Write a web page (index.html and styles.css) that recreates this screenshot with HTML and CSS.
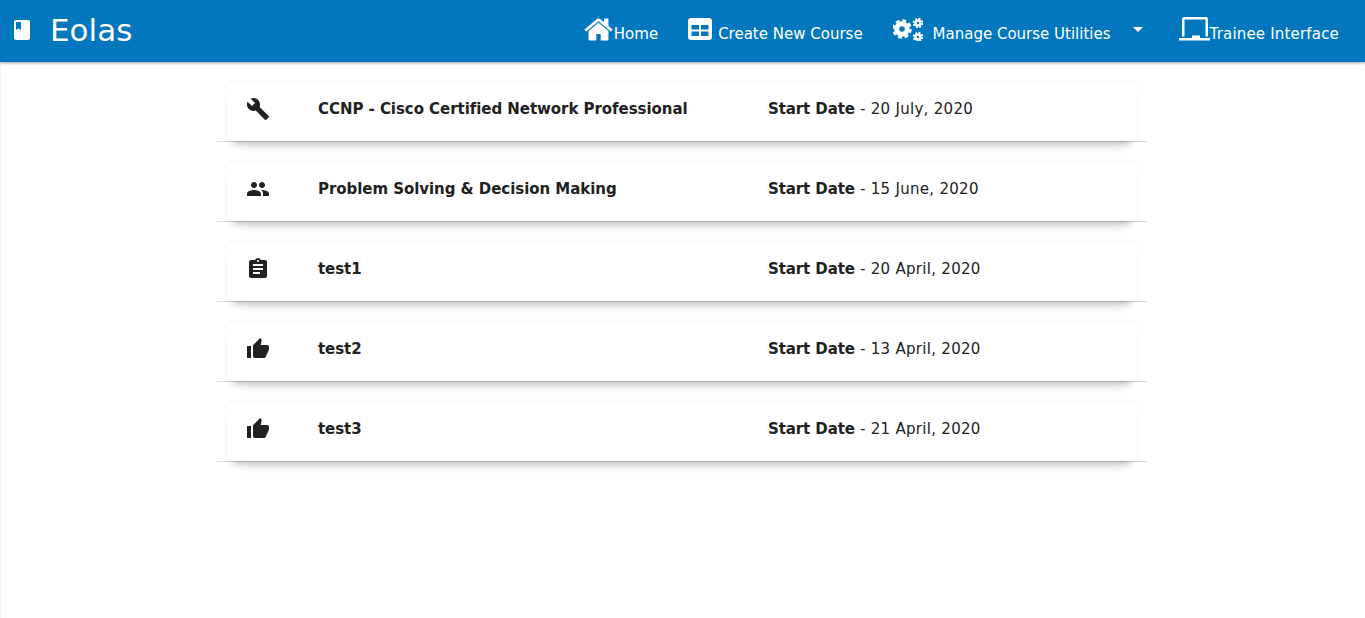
FILE: index.html
```html
<!DOCTYPE html>
<html lang="en">
<head>
<meta charset="utf-8">
<title>Eolas</title>
<link rel="stylesheet" href="styles.css">
</head>
<body>
<header class="topbar">
  <div class="brand">
    <svg class="brand-icon" viewBox="0 0 24 24"><path d="M18 2H6c-1.100 0-2 .9-2 2v16c0 1.100.9 2 2 2h12c1.100 0 2-.9 2-2V4c0-1.100-.9-2-2-2zM6 4h5v8l-2.500-1.500L6 12V4z"/></svg>
    <span class="brand-name">Eolas</span>
  </div>
  <nav class="nav">
    <a class="nav-item nav-home">
      <svg class="ic-home" viewBox="0 0 1792 1792"><path d="M1472 992v480q0 26-19 45t-45 19h-384v-384h-256v384h-384q-26 0-45-19t-19-45v-480q0-1 .5-3t.5-3l575-474 575 474q1 2 1 6zm223-69l-62 74q-8 9-21 11h-3q-13 0-21-7l-692-577-692 577q-12 8-24 7-13-2-21-11l-62-74q-8-10-7-23.500t11-21.500l719-599q32-26 76-26t76 26l244 204v-195q0-14 9-23t23-9h192q14 0 23 9t9 23v408l219 182q10 8 11 21.500t-7 23.500z"/></svg>
      <span>Home</span>
    </a>
    <a class="nav-item nav-create">
      <svg class="ic-table" viewBox="0 0 24 22"><path fill-rule="evenodd" d="M3 0h18a3 3 0 0 1 3 3v16a3 3 0 0 1-3 3H3a3 3 0 0 1-3-3V3a3 3 0 0 1 3-3zM3.500 7v4.500h7.500V7zM13 7v4.500h7.500V7zM3.500 13.500V18h7.500v-4.500zM13 13.500V18h7.500v-4.500z"/></svg>
      <span>Create New Course</span>
    </a>
    <a class="nav-item nav-manage">
      <svg class="ic-cogs" viewBox="0 0 30 24">
        <g fill="none" stroke="#fff">
          <circle cx="9" cy="12" r="5.300" stroke-width="5"/>
          <circle cx="9" cy="12" r="8.600" stroke-width="2.400" stroke-dasharray="3.900 2.850"/>
          <circle cx="25" cy="6" r="2.500" stroke-width="2.400"/>
          <circle cx="25" cy="6" r="4.300" stroke-width="1.800" stroke-dasharray="2 1.370"/>
          <circle cx="25" cy="20" r="2.500" stroke-width="2.400"/>
          <circle cx="25" cy="20" r="4.300" stroke-width="1.800" stroke-dasharray="2 1.370"/>
        </g>
      </svg>
      <span>Manage Course Utilities</span>
      <i class="caret"></i>
    </a>
    <a class="nav-item nav-trainee">
      <svg class="ic-laptop" viewBox="0 0 31 24"><path fill-rule="evenodd" d="M5 0h22a2 2 0 0 1 2 2v17.500h-2.500V2.500h-21v17H3V2a2 2 0 0 1 2-2zM0 21h13v-2.500h8V21h10v2.500H0z"/></svg>
      <span>Trainee Interface</span>
    </a>
  </nav>
</header>
<main class="list">
  <div class="row">
    <div class="card">
      <svg class="row-icon" viewBox="0 0 24 24"><path d="M22.700 19l-9.100-9.100c.9-2.300.4-5-1.500-6.900-2-2-5-2.400-7.400-1.300L9 6 6 9 1.600 4.700C.4 7.100.9 10.100 2.900 12.100c1.900 1.900 4.600 2.400 6.900 1.500l9.100 9.100c.4.400 1 .4 1.400 0l2.300-2.300c.5-.4.5-1.100.1-1.400z"/></svg>
      <div class="title">CCNP - Cisco Certified Network Professional</div>
      <div class="date"><b>Start Date</b> - 20 July, 2020</div>
    </div>
  </div>
  <div class="row">
    <div class="card">
      <svg class="row-icon" viewBox="0 0 24 24"><path d="M16 11c1.660 0 2.990-1.340 2.990-3S17.660 5 16 5c-1.660 0-3 1.340-3 3s1.340 3 3 3zm-8 0c1.660 0 2.990-1.340 2.990-3S9.660 5 8 5C6.340 5 5 6.340 5 8s1.340 3 3 3zm0 2c-2.330 0-7 1.170-7 3.500V19h14v-2.500c0-2.330-4.670-3.500-7-3.500zm8 0c-.29 0-.62.020-.97.050 1.160.84 1.970 1.970 1.970 3.450V19h6v-2.500c0-2.330-4.670-3.500-7-3.500z"/></svg>
      <div class="title">Problem Solving &amp; Decision Making</div>
      <div class="date"><b>Start Date</b> - 15 June, 2020</div>
    </div>
  </div>
  <div class="row">
    <div class="card">
      <svg class="row-icon" viewBox="0 0 24 24"><path d="M19 3h-4.180C14.400 1.840 13.300 1 12 1c-1.300 0-2.400.84-2.820 2H5c-1.100 0-2 .9-2 2v14c0 1.100.9 2 2 2h14c1.100 0 2-.9 2-2V5c0-1.100-.9-2-2-2zm-7 0c.55 0 1 .45 1 1s-.45 1-1 1-1-.45-1-1 .45-1 1-1zm2 14H7v-2h7v2zm3-4H7v-2h10v2zm0-4H7V7h10v2z"/></svg>
      <div class="title">test1</div>
      <div class="date"><b>Start Date</b> - 20 April, 2020</div>
    </div>
  </div>
  <div class="row">
    <div class="card">
      <svg class="row-icon" viewBox="0 0 24 24"><path d="M1 21h4V9H1v12zm22-11c0-1.100-.9-2-2-2h-6.310l.95-4.570.03-.32c0-.41-.17-.79-.44-1.060L14.170 1 7.590 7.590C7.220 7.950 7 8.450 7 9v10c0 1.100.9 2 2 2h9c.83 0 1.540-.5 1.840-1.220l3.020-7.050c.09-.23.14-.47.14-.73v-2z"/></svg>
      <div class="title">test2</div>
      <div class="date"><b>Start Date</b> - 13 April, 2020</div>
    </div>
  </div>
  <div class="row">
    <div class="card">
      <svg class="row-icon" viewBox="0 0 24 24"><path d="M1 21h4V9H1v12zm22-11c0-1.100-.9-2-2-2h-6.310l.95-4.570.03-.32c0-.41-.17-.79-.44-1.060L14.170 1 7.590 7.590C7.220 7.950 7 8.450 7 9v10c0 1.100.9 2 2 2h9c.83 0 1.540-.5 1.840-1.220l3.020-7.050c.09-.23.14-.47.14-.73v-2z"/></svg>
      <div class="title">test3</div>
      <div class="date"><b>Start Date</b> - 21 April, 2020</div>
    </div>
  </div>
</main>
</body>
</html>
```
FILE: styles.css
```css
* { box-sizing: border-box; }
html, body { height: 100%; }
body {
  margin: 0;
  background: #fff;
  box-shadow: inset 1px 0 0 #f3f3f3;
  color: #212121;
  font-family: "DejaVu Sans", Verdana, sans-serif;
  font-size: 15px;
  overflow: hidden;
}
.topbar {
  height: 62px;
  background: #0277bd;
  color: #fff;
  display: flex;
  align-items: center;
  justify-content: space-between;
  box-shadow: 0 1px 3px rgba(0,0,0,.4);
  padding: 0 26px 0 10px;
}
.brand { display: flex; align-items: center; }
.brand-icon { width: 24px; height: 24px; fill: #fff; margin-top: -2px; }
.brand-name { font-size: 31px; margin: -2px 0 0 16px; }
.nav { display: flex; align-items: center; }
.nav-item { display: flex; align-items: center; color: #fff; }
.nav-item span { position: relative; top: 3px; }
.nav-item svg { fill: #fff; display: block; }
.ic-home { width: 31px; height: 31px; margin-top: -4px; }
.nav-create { margin-left: 30px; }
.ic-table { width: 24px; height: 22px; margin: -4px 6px 0 0; }
.nav-manage { margin-left: 30px; }
.ic-cogs { width: 30px; height: 24px; margin: -4px 10px 0 0; }
.caret {
  width: 0; height: 0;
  border: 5px solid transparent;
  border-top-color: #fff;
  border-bottom: 0;
  margin: -3px 0 0 22px;
}
.nav-trainee { margin-left: 36px; }
.nav-trainee span { letter-spacing: .18px; }
.ic-laptop { width: 31px; height: 24px; margin-top: -4px; }
.list { width: 930px; margin: 20px auto 0 217px; display: flex; flex-direction: column; gap: 20px; }
.row { border-bottom: 1px solid #d8d8d8; height: 60px; }
.card {
  margin: 0 10px;
  height: 59px;
  background: #fff;
  display: flex;
  align-items: center;
  padding: 0 0 6px 19px;
  box-shadow: 0 -1px 3px -1px rgba(0,0,0,.1), 0 8px 8px -6px rgba(0,0,0,.28), 0 14px 14px -10px rgba(0,0,0,.06);
}
.row-icon { width: 24px; height: 24px; fill: #212121; flex: none; }
.title { width: 450px; margin-left: 48px; font-weight: 700; letter-spacing: -.05px; flex: none; }
.date { white-space: nowrap; letter-spacing: .3px; }
.date b { letter-spacing: -.1px; }
```
